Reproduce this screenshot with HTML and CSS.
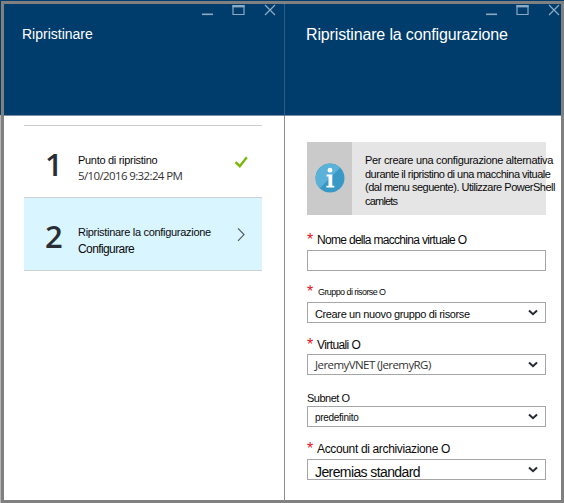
FILE: index.html
```html
<!DOCTYPE html>
<html lang="it">
<head>
<meta charset="utf-8">
<title>Ripristinare</title>
<link rel="stylesheet" href="styles.css">
</head>
<body>
<main class="frame">
  <section class="blade blade-left">
    <header class="head">
      <svg class="controls" width="74" height="14" viewBox="0 0 74 14"><path class="min" d="M0 10.3h11"/><path class="box" d="M31 1.5h11v9H31z"/><path class="bar" d="M30.5 2.2h12"/><path class="close" d="M63 1l10 10M73 1l-10 10"/></svg>
      <h1 class="title title-small">Ripristinare</h1>
    </header>
    <div class="steps">
      <div class="step">
        <span class="num">1</span>
        <div class="step-text"><span class="t-point">Punto di ripristino</span><span class="t-date">5/10/2016 9:32:24 PM</span></div>
        <svg class="state" width="14" height="14" viewBox="0 0 14 14"><path class="check" d="M1.5 6.2l4.3 4L12.8 1.2"/></svg>
      </div>
      <div class="step active">
        <span class="num">2</span>
        <div class="step-text"><span class="t-restore">Ripristinare la configurazione</span><span class="t-conf">Configurare</span></div>
        <svg class="state" width="14" height="14" viewBox="0 0 14 14"><path class="chev" d="M4 .4l6 6.2-6 6.2"/></svg>
      </div>
    </div>
  </section>
  <section class="blade blade-right">
    <header class="head">
      <svg class="controls" width="74" height="14" viewBox="0 0 74 14"><path class="min" d="M0 10.3h11"/><path class="box" d="M31 1.5h11v9H31z"/><path class="bar" d="M30.5 2.2h12"/><path class="close" d="M63 1l10 10M73 1l-10 10"/></svg>
      <h1 class="title title-large">Ripristinare la configurazione</h1>
    </header>
    <div class="form">
      <div class="info">
        <div class="info-icon">
          <svg width="30" height="30" viewBox="0 0 30 30"><circle cx="15" cy="15" r="14.5" fill="#3999c6"/><path d="M4.7 25.2A14.5 14.5 0 0 1 25.2 4.7z" fill="#5ab2d9"/><circle cx="15" cy="7.2" r="2.4" fill="#fff"/><path d="M11.5 11.6h5.8v11.2h2v1.8h-8v-1.8h2.2v-9.3h-2z" fill="#fff"/></svg>
        </div>
        <p class="info-text"><span class="i1">Per creare una configurazione alternativa</span><span class="i2">durante il ripristino di una macchina vituale</span><span class="i3">(dal menu seguente). Utilizzare PowerShell</span><span class="i4">camlets</span></p>
      </div>
      <div class="label l1"><b>*</b><span>Nome della macchina virtuale O</span></div>
      <div class="field"></div>
      <div class="label l2"><b>*</b><span>Gruppo di risorse O</span></div>
      <div class="field"><span class="v2">Creare un nuovo gruppo di risorse</span><svg class="arrow" width="10" height="7" viewBox="0 0 10 7"><path d="M1 1.5l4 3.7 4-3.7"/></svg></div>
      <div class="label l3"><b>*</b><span>Virtuali O</span></div>
      <div class="field"><span class="v3">JeremyVNET (JeremyRG)</span><svg class="arrow" width="10" height="7" viewBox="0 0 10 7"><path d="M1 1.5l4 3.7 4-3.7"/></svg></div>
      <div class="label l4"><span>Subnet O</span></div>
      <div class="field"><span class="v4">predefinito</span><svg class="arrow" width="10" height="7" viewBox="0 0 10 7"><path d="M1 1.5l4 3.7 4-3.7"/></svg></div>
      <div class="label l5"><b>*</b><span>Account di archiviazione O</span></div>
      <div class="field"><span class="v5">Jeremias standard</span><svg class="arrow" width="10" height="7" viewBox="0 0 10 7"><path d="M1 1.5l4 3.7 4-3.7"/></svg></div>
    </div>
  </section>
</main>
</body>
</html>
```
FILE: styles.css
```css
* { box-sizing: border-box; }
body { margin: 0; font-family: "Liberation Sans", Arial, sans-serif; color: #0a0a0a; background: #003c6c; }
.frame { width: 564px; height: 503px; display: flex; overflow: hidden; padding: 1px 0 0 1px; background: linear-gradient(#003c6c 115px, #b5b5b5 115px); }
.blade { height: 502px; border-top: 3px solid #808080; border-bottom: 3px solid #808080; background: #fff; white-space: nowrap; }
.blade-left { width: 283px; border-left: 3px solid #808080; }
.blade-right { width: 280px; border-right: 3px solid #808080; border-left: 1px solid #8c8c8c; }
.head { height: 112px; background: #003c6c; border-bottom: 1px solid #7890a8; }
.blade-right .head { margin-left: -1px; border-left: 1px solid #2c5d87; }
.controls { display: block; margin-left: 198px; fill: none; stroke: #8caac4; }
.blade-right .controls { margin-left: 201px; }
.min { stroke-width: 1.6; }
.box { stroke-width: 1.2; }
.bar { stroke-width: 2.4; }
.close { stroke-width: 1.3; }
.title { margin: 0; color: #fff; font-weight: 400; line-height: 20px; }
.title-small { font-size: 14px; padding: 6px 0 0 18px; }
.title-large { font-size: 16px; letter-spacing: -.15px; padding: 7px 0 0 21px; }
.steps { margin: 9px 0 0 20px; width: 238px; border-top: 1px solid #ccc; }
.step { height: 72px; display: flex; border-bottom: 1px solid #ccd2d4; }
.step + .step { height: 73px; }
.active { background: #d9f5ff; }
.num { flex: none; width: 54px; padding: 18px 0 0 21px; font: 600 31px/40px "Open Sans", sans-serif; color: #2a2d33; }
.step-text { flex: none; width: 151px; padding-top: 26px; display: flex; flex-direction: column; }
.step-text span { line-height: 16px; }
.t-point { font-size: 11px; letter-spacing: -.3px; }
.t-date { font: 11.5px/16px "Open Sans", sans-serif; letter-spacing: -.62px; color: #333; }
.t-restore { font-size: 11px; letter-spacing: -.3px; }
.step-text .t-conf { font-size: 12px; letter-spacing: -.6px; line-height: 18px; }
.state { margin-top: 30px; margin-left: 5px; fill: none; }
.check { stroke: #76b900; stroke-width: 2.3; }
.chev { stroke: #555b60; stroke-width: 1.2; }
.form { padding: 26px 0 0 22px; width: 261px; }
.info { height: 73px; display: flex; background: #e5e5e5; }
.info-icon { flex: none; width: 45px; background: #cacaca; padding: 21px 0 0 8px; }
.info-text { margin: 0; padding: 12px 0 0 13px; font-size: 11px; }
.info-text span { display: block; line-height: 13.5px; }
.i1 { letter-spacing: -.32px; }
.i2 { letter-spacing: -.5px; }
.i3 { letter-spacing: -.5px; }
.i4 { letter-spacing: -.8px; }
.label { display: flex; line-height: 16px; font-size: 12px; }
.label b { width: 10px; color: #e81123; font: 16px/16px "Liberation Sans", sans-serif; }
.l1 { height: 35px; padding-top: 17px; letter-spacing: -.69px; }
.l2 { height: 31px; padding-top: 13px; letter-spacing: -.58px; }
.l3 { height: 31px; padding-top: 14px; letter-spacing: -.6px; }
.l4 { height: 31px; padding-top: 15px; letter-spacing: -.5px; }
.l5 { height: 32px; padding-top: 14px; letter-spacing: -.35px; }
.l2 span { font-size: 9px; padding-left: 1px; }
.l4 span { font-size: 11px; }
.field { width: 239px; height: 21px; border: 1px solid #a6a6a6; display: flex; justify-content: space-between; padding-left: 7px; line-height: 22px; }
.arrow { margin: 6px 7px 0 0; fill: none; stroke: #252a33; stroke-width: 2; }
.v2 { font-size: 11px; letter-spacing: -.37px; }
.v3 { font: 11.5px/19px "Open Sans", sans-serif; letter-spacing: -.57px; color: #333; }
.v4 { font-size: 10px; letter-spacing: -.3px; }
.v5 { font-size: 14px; line-height: 25px; letter-spacing: -.6px; }
```
